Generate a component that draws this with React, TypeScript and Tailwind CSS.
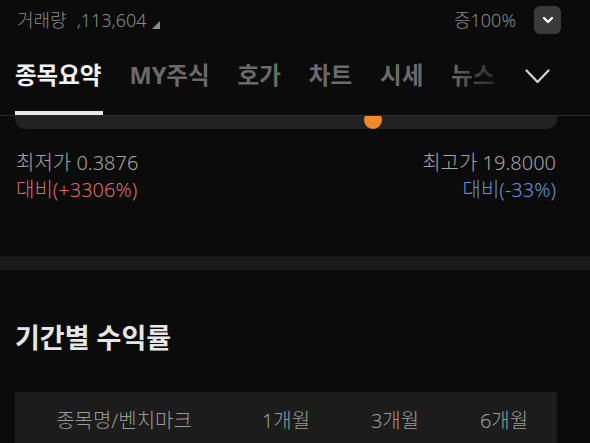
import { ChevronDown } from "lucide-react";

const font = { fontFamily: '"Noto Sans", "Noto Sans CJK KR", sans-serif' };

export default function App() {
  const tabs = ["MY주식", "호가", "차트", "시세"];
  return (
    <div className="w-[590px] h-[443px] overflow-hidden bg-[#0b0b0b]" style={font}>
      {/* Top info row */}
      <div className="flex h-[40px] items-center pl-[17px] pr-[29px]">
        <div className="flex items-center text-[18px] font-light text-[#8a8a8a]">
          <span>거래량</span>
          <span className="ml-[10px]">,113,604</span>
          <span className="ml-[5px] mt-[9px] h-0 w-0 [border-left:8px_solid_transparent] [border-bottom:8px_solid_#8a8a8a]"></span>
        </div>
        <div className="ml-auto flex items-center">
          <span className="text-[18px] font-light text-[#8a8a8a]">증100%</span>
          <div className="ml-[18px] flex h-[28px] w-[27px] items-center justify-center rounded-[6px] bg-[#3a3a3a]">
            <ChevronDown className="h-[16px] w-[16px] text-white" strokeWidth={3.5} />
          </div>
        </div>
      </div>

      {/* Tabs */}
      <div className="flex h-[71px] items-center pl-[15px] text-[23.5px] font-bold leading-none">
        <span className="text-[#f2f2f2]">종목요약</span>
        {tabs.map((t) => (
          <span key={t} className="ml-[28px] text-[#6a6a6a]">
            {t}
          </span>
        ))}
        <span className="ml-[28px] bg-gradient-to-r from-[#6a6a6a] to-[#2a2a2a] bg-clip-text text-transparent">뉴스</span>
        <svg className="ml-[30px] mt-[2px]" width="25" height="15" viewBox="0 0 25 15" fill="none">
          <polyline points="1.5,1.5 12.5,13 23.5,1.5" stroke="#d4d4d4" strokeWidth="2.2" strokeLinecap="round" strokeLinejoin="round" />
        </svg>
      </div>

      {/* Underline + track */}
      <div>
        <div className="ml-[15px] h-[4px] w-[88px] bg-[#e8e8e8]"></div>
        <div className="h-px bg-[#2c2c2c]"></div>
        <div className="relative ml-[15px] h-[13px] w-[542px] overflow-hidden rounded-b-[10px] bg-[#222222]">
          <div className="absolute left-[349px] top-[-5px] h-[18px] w-[18px] rounded-full bg-[#f0892a]"></div>
        </div>
      </div>

      {/* Low / high */}
      <div className="flex pl-[16px] pr-[34px] pt-[20px] text-[20px] font-light leading-[27px]">
        <div>
          <div className="text-[#a5a5a5]">최저가 0.3876</div>
          <div className="text-[#dc6a68]">대비(+3306%)</div>
        </div>
        <div className="ml-auto text-right">
          <div className="text-[#a5a5a5]">최고가 19.8000</div>
          <div className="text-[#6293dc]">대비(-33%)</div>
        </div>
      </div>

      {/* Divider band */}
      <div className="mt-[53px] h-[14px] border-t border-[#141414] bg-[#1b1b1b]"></div>

      {/* Section title */}
      <div className="px-[15px] pt-[51px] text-[27px] font-bold leading-[34px] text-[#e6e6e6]">
        기간별 수익률
      </div>

      {/* Table header */}
      <div className="ml-[15px] mt-[37px] flex h-[60px] w-[542px] items-start bg-[#1c1c1c] pt-[15px] text-[20px] font-light leading-[28px] text-[#9a9a9a]">
        <div className="w-[218px] text-center">종목명/벤치마크</div>
        <div className="w-[106px] text-center">1개월</div>
        <div className="w-[112px] text-center">3개월</div>
        <div className="w-[106px] text-center">6개월</div>
      </div>
    </div>
  );
}
